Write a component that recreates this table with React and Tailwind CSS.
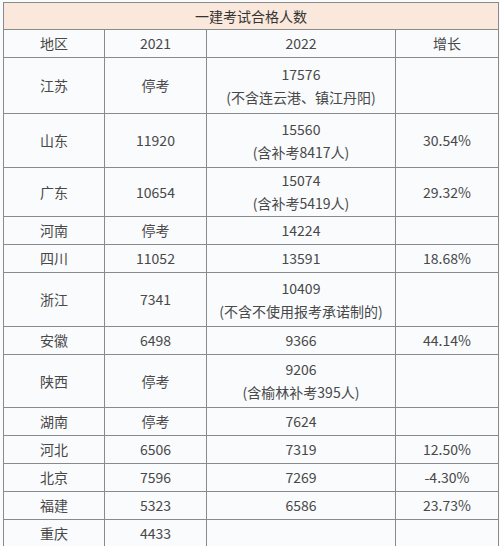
const rows = [
  { region: "江苏", y2021: "停考", y2022: ["17576", "(不含连云港、镇江丹阳)"], growth: "", h: "h-[56px]" },
  { region: "山东", y2021: "11920", y2022: ["15560", "(含补考8417人)"], growth: "30.54%", h: "h-[54px]" },
  { region: "广东", y2021: "10654", y2022: ["15074", "(含补考5419人)"], growth: "29.32%", h: "h-[49px]" },
  { region: "河南", y2021: "停考", y2022: ["14224"], growth: "", h: "h-[28px]" },
  { region: "四川", y2021: "11052", y2022: ["13591"], growth: "18.68%", h: "h-[28px]" },
  { region: "浙江", y2021: "7341", y2022: ["10409", "(不含不使用报考承诺制的)"], growth: "", h: "h-[54px]" },
  { region: "安徽", y2021: "6498", y2022: ["9366"], growth: "44.14%", h: "h-[28px]" },
  { region: "陕西", y2021: "停考", y2022: ["9206", "(含榆林补考395人)"], growth: "", h: "h-[53px]" },
  { region: "湖南", y2021: "停考", y2022: ["7624"], growth: "", h: "h-[28px]" },
  { region: "河北", y2021: "6506", y2022: ["7319"], growth: "12.50%", h: "h-[28px]" },
  { region: "北京", y2021: "7596", y2022: ["7269"], growth: "-4.30%", h: "h-[28px]" },
  { region: "福建", y2021: "5323", y2022: ["6586"], growth: "23.73%", h: "h-[28px]" },
  { region: "重庆", y2021: "4433", y2022: [""], growth: "", h: "h-[28px]" },
];

const cell = "border border-[#8a8a8a] text-center align-middle p-0";

export default function App() {
  return (
    <div className="w-[500px] h-[546px] overflow-hidden bg-[#f9fbfd] pt-[2px] pl-[3px] font-['Noto_Sans_CJK_SC',sans-serif] text-[14px] text-[#484848] leading-[23px]">
      <table className="border-collapse table-fixed w-[495px]">
        <colgroup>
          <col className="w-[101px]" />
          <col className="w-[102px]" />
          <col className="w-[189px]" />
          <col className="w-[103px]" />
        </colgroup>
        <tbody>
          <tr className="h-[27px]">
            <td colSpan={4} className={`${cell} bg-[#fbe8dc] text-[#333]`}>
              一建考试合格人数
            </td>
          </tr>
          <tr className="h-[28px]">
            <td className={cell}>地区</td>
            <td className={cell}>2021</td>
            <td className={cell}>2022</td>
            <td className={cell}>增长</td>
          </tr>
          {rows.map((r) => (
            <tr key={r.region} className={r.h}>
              <td className={cell}>{r.region}</td>
              <td className={cell}>{r.y2021}</td>
              <td className={cell}>
                {r.y2022.map((line, i) => (
                  <div key={i}>{line}</div>
                ))}
              </td>
              <td className={cell}>{r.growth}</td>
            </tr>
          ))}
        </tbody>
      </table>
    </div>
  );
}
